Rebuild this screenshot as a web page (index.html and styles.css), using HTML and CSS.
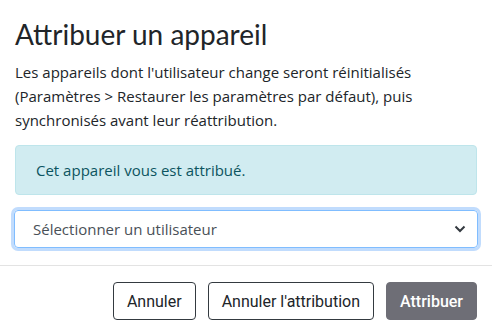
FILE: index.html
```html
<!DOCTYPE html>
<html lang="fr">
<head>
<meta charset="utf-8">
<link rel="stylesheet" href="styles.css">
</head>
<body>
<div class="modal">
  <div class="body">
    <h1 class="title">Attribuer un appareil</h1>
    <p class="desc">Les appareils dont l'utilisateur change seront réinitialisés (Paramètres &gt; Restaurer les paramètres par défaut), puis synchronisés avant leur réattribution.</p>
    <div class="alert">Cet appareil vous est attribué.</div>
    <div class="select">
      <span>Sélectionner un utilisateur</span>
      <svg class="chev" width="12" height="8" viewBox="0 0 12 8"><path d="M1.5 1.5 L6 6 L10.5 1.5" fill="none" stroke="#343a40" stroke-width="2"/></svg>
    </div>
  </div>
  <div class="footer">
    <button class="btn outline">Annuler</button>
    <button class="btn outline">Annuler l'attribution</button>
    <button class="btn primary">Attribuer</button>
  </div>
</div>
</body>
</html>
```
FILE: styles.css
```css
html, body { margin: 0; padding: 0; background: #fff; }
body { font-family: "Open Sans", "Noto Sans", sans-serif; color: #212529; }
.modal { width: 492px; }
.body { padding: 17px 15px 17px 15px; }
.title { margin: 0 0 9px 0; font-family: "Lato", "Open Sans", sans-serif; font-size: 28px; font-weight: 400; line-height: 34px; color: #212529; }
.desc { margin: 0 0 13px 0; font-size: 15px; line-height: 24px; color: #212529; }
.alert { background: #d1ecf1; border: 1px solid #bee5eb; border-radius: 4px; color: #0c5460; font-size: 15px; height: 50px; box-sizing: border-box; padding: 0 20px; display: flex; align-items: center; margin-bottom: 15px; }
.select { display: flex; align-items: center; justify-content: space-between; height: 38px; box-sizing: border-box; margin: 0 -1px; border: 1px solid #80bdff; border-radius: 4px; box-shadow: 0 0 0 3px #c1dcfd; padding: 0 11px 0 18px; font-size: 15px; color: #495057; }
.chev { display: block; }
.footer { border-top: 1px solid #e3e3e3; display: flex; justify-content: flex-end; gap: 12px; padding: 16px 15px; }
.btn { font-family: "Roboto", "Noto Sans", sans-serif; font-size: 16px; height: 38px; padding: 0 13px; border-radius: 4px; background: #fff; color: #212529; border: 1px solid #343a40; }
.btn.primary { background: #6e6e76; border-color: #6e6e76; color: #fff; font-weight: 500; }
```
